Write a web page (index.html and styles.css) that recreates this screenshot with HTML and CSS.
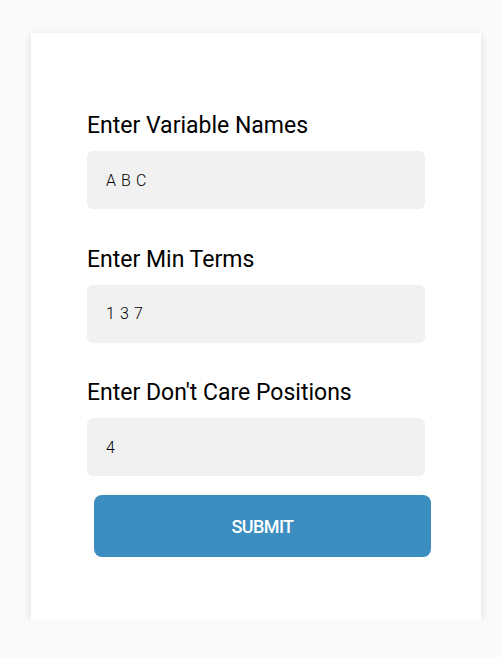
FILE: index.html
```html
<!DOCTYPE html>
<html>
<head>
<meta charset="utf-8">
<link rel="stylesheet" href="styles.css">
</head>
<body>
<div class="card">
  <form class="form">
    <label class="field">
      <span class="label">Enter Variable Names</span>
      <input class="input" type="text" value="A B C">
    </label>
    <label class="field">
      <span class="label">Enter Min Terms</span>
      <input class="input" type="text" value="1 3 7">
    </label>
    <label class="field">
      <span class="label">Enter Don't Care Positions</span>
      <input class="input" type="text" value="4">
    </label>
    <button class="submit" type="button">SUBMIT</button>
  </form>
</div>
</body>
</html>
```
FILE: styles.css
```css
html, body {
  margin: 0;
  padding: 0;
}
body {
  background: #fafafa;
  font-family: Roboto, "Liberation Sans", sans-serif;
  padding: 33px 0 0 31px;
}
.card {
  width: 450px;
  height: 587px;
  box-sizing: border-box;
  background: #fff;
  box-shadow: 0 2px 8px rgba(0, 0, 0, 0.12);
  padding: 80px 56px 0 56px;
}
.form {
  display: flex;
  flex-direction: column;
}
.field {
  display: flex;
  flex-direction: column;
}
.field + .field {
  margin-top: 37.5px;
}
.label {
  font-size: 23px;
  line-height: 26px;
  color: #000;
  margin-bottom: 12px;
}
.input {
  width: 338px;
  height: 58px;
  box-sizing: border-box;
  border: none;
  border-radius: 6px;
  background: #f1f1f1;
  padding: 0 19px;
  font-family: Roboto, "Liberation Sans", sans-serif;
  font-weight: 300;
  font-size: 16px;
  letter-spacing: 0.6px;
  color: #000;
  outline: none;
}
.submit {
  margin: 19px 0 0 7px;
  width: 337px;
  height: 62px;
  border: none;
  border-radius: 8px;
  background: #3c8dc0;
  color: #fff;
  font-family: Roboto, "Liberation Sans", sans-serif;
  font-weight: 500;
  font-size: 18px;
  letter-spacing: -0.6px;
}
```
